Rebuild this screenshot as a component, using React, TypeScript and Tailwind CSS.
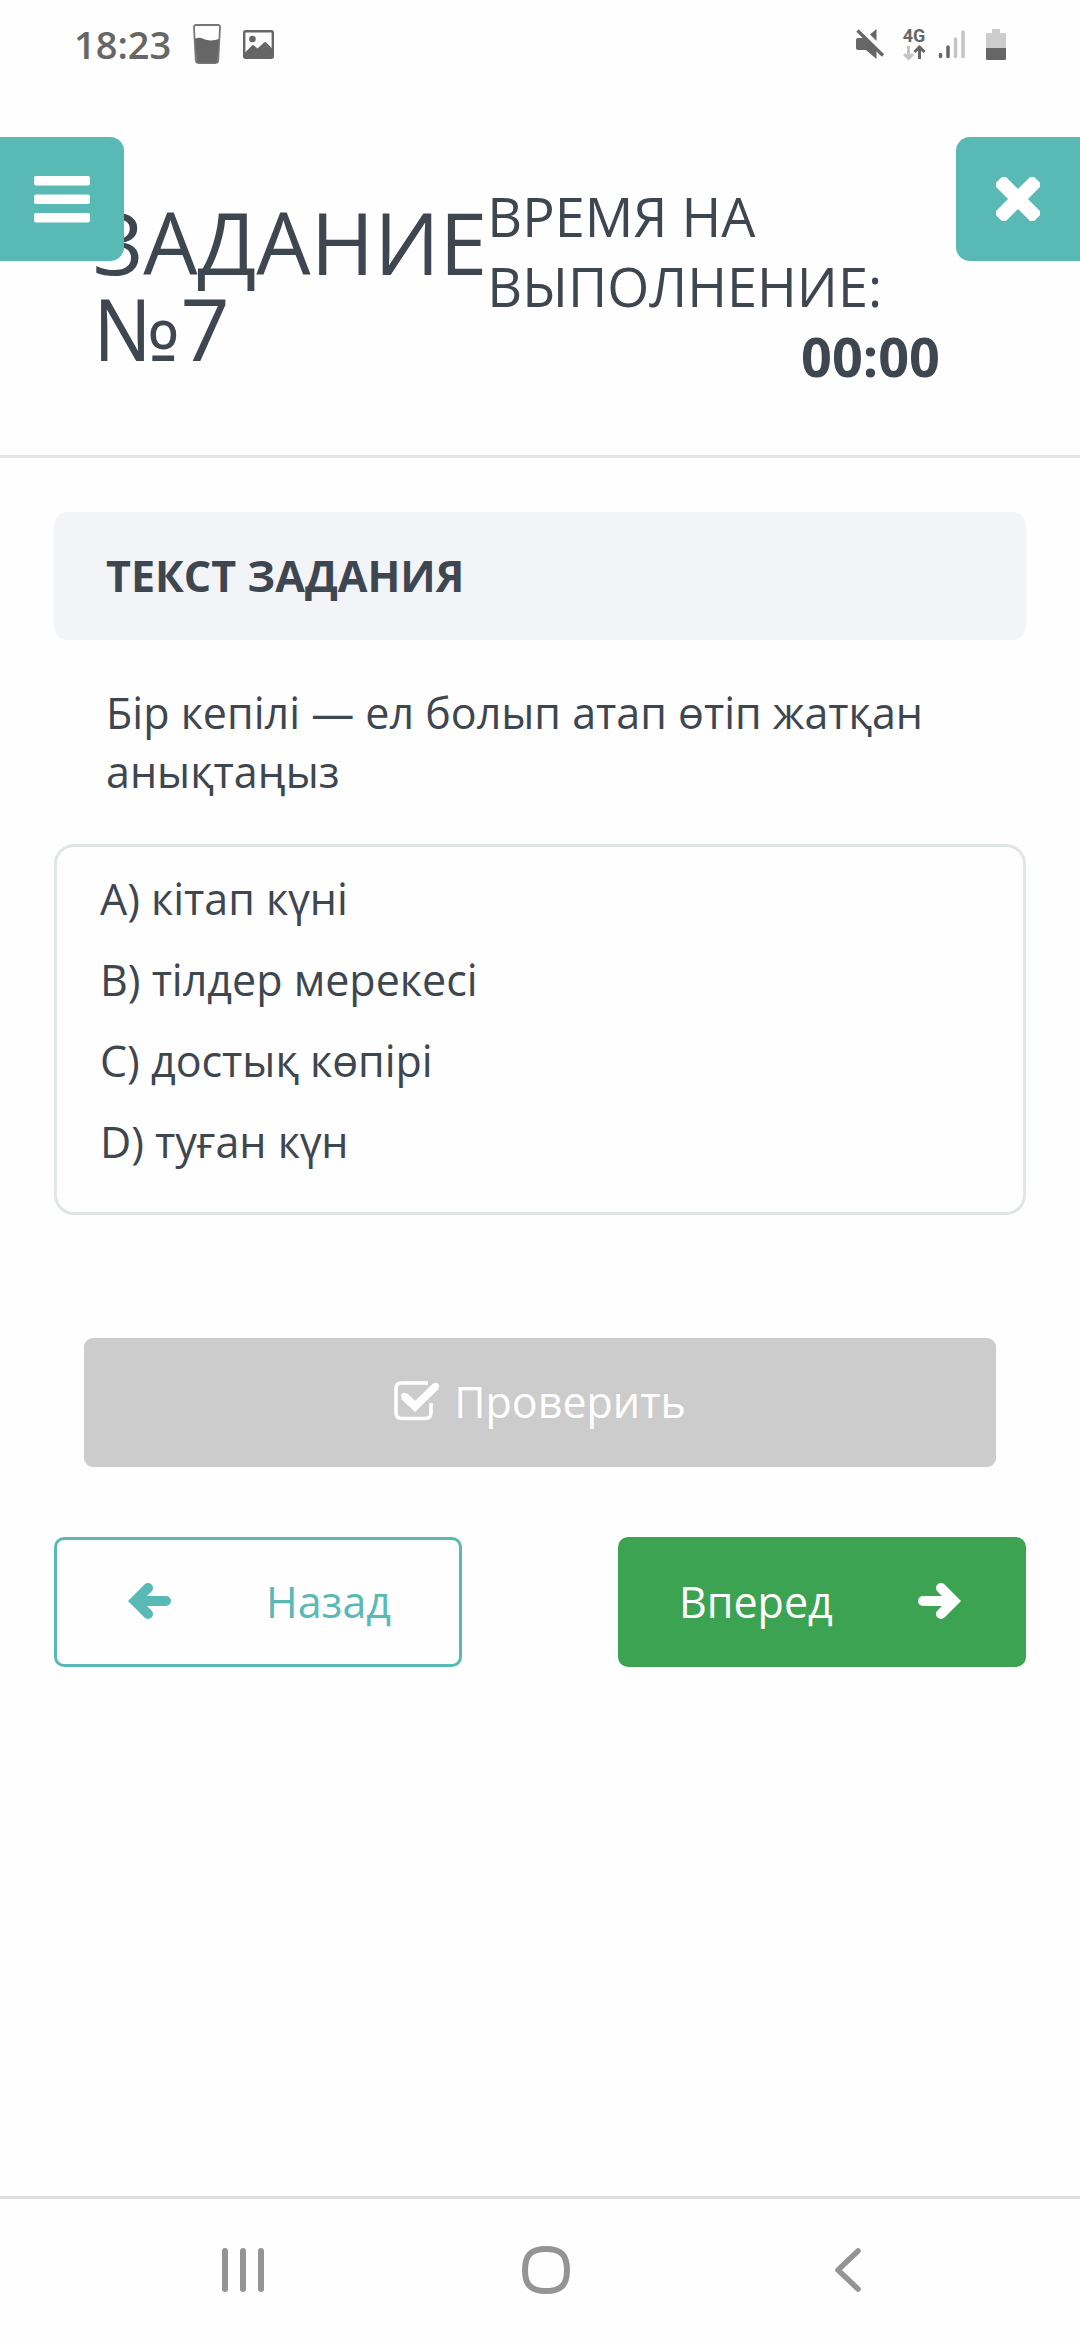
const options = [
  'A) кітап күні',
  'B) тілдер мерекесі',
  'C) достық көпірі',
  'D) туған күн',
]

function GlassIcon() {
  return (
    <svg className="h-10 w-7" viewBox="0 0 28 40">
      <path d="M3 1h22q2.300 0 2 2.500L25.200 36.500Q25 39 22.500 39h-17Q3 39 2.800 36.500L1 3.500Q.7 1 3 1Z" fill="none" stroke="#777" strokeWidth="1.800" />
      <path d="M2 15C5 13 8 13.500 12 15.500q7 2 14-.5l-1.500 21.500q0 2-2 2h-17q-2 0-2-2Z" fill="#666" />
    </svg>
  )
}

function PictureIcon() {
  return (
    <svg className="h-[29px] w-[31px]" viewBox="0 0 31 29">
      <rect x="1.200" y="1.200" width="28.600" height="26.600" rx="1.500" fill="none" stroke="#666" strokeWidth="2.400" />
      <circle cx="9.500" cy="9" r="3.300" fill="#666" />
      <path d="M2 22.500 9 15.500q1-1 2 0l3.500 3L21 12.500q1.200-1 2.400 0L29 18.500V28H2Z" fill="#666" />
    </svg>
  )
}

function MuteIcon() {
  return (
    <svg className="h-8 w-[29px]" viewBox="0 0 29 32" fill="#666">
      <path d="M2 10h6l12.500 12.500V31L10 22H2q-2 0-2-2v-8q0-2 2-2Z" />
      <path d="M20.500 1v12L14 6.500Z" />
      <path d="m1.500 2.500 25.500 25" stroke="#666" strokeWidth="3.200" />
    </svg>
  )
}

function DataArrowsIcon() {
  return (
    <svg className="h-4 w-6" viewBox="0 0 24 16" fill="none" strokeWidth="3">
      <path d="M6.500 1v11M2 9l4.500 4.500L11 9" stroke="#c4c4c4" />
      <path d="M17.500 14V3M12.500 7l5-5 5 5" stroke="#666" />
    </svg>
  )
}

function SignalIcon() {
  return (
    <svg className="h-[30px] w-7" viewBox="0 0 28 30" strokeWidth="3.500" strokeLinecap="round">
      <path d="M2.500 25.500v2M10 18v9.500" stroke="#666" />
      <path d="M17.500 10v17.500M25 3v24.500" stroke="#c4c4c4" />
    </svg>
  )
}

function BatteryIcon() {
  return (
    <svg className="h-[31px] w-5" viewBox="0 0 20 31">
      <path d="M6 0h8v4h5q1 0 1 1v14H0V5q0-1 1-1h5Z" fill="#ccc" />
      <path d="M0 19h20v11q0 1-1 1H1q-1 0-1-1Z" fill="#666" />
    </svg>
  )
}

function CheckIcon() {
  return (
    <svg className="mb-1 h-10 w-[46px]" viewBox="0 0 46 40" fill="none" stroke="#fff">
      <path d="M34 2H7.500Q2 2 2 7.500v24Q2 37.500 7.500 37.500h24q5.500 0 5.500-6V22" strokeWidth="3.600" />
      <path d="m10 15 11 10.500L42 5" strokeWidth="8" />
      <path d="m10 15 11 10.500L42 5" strokeWidth="6" strokeLinecap="round" />
    </svg>
  )
}

function ArrowIcon({ className }: { className?: string }) {
  return (
    <svg className={`mb-[3px] h-9 w-[43px] ${className ?? ''}`} viewBox="0 0 43 36" fill="none" stroke="currentColor" strokeWidth="10" strokeLinecap="round">
      <path d="M5 18h29" />
      <path d="m23 5 13 13-13 13" />
    </svg>
  )
}

export default function App() {
  return (
    <div className="flex min-h-screen flex-col bg-[#fefefe] font-['Open_Sans','Noto_Sans',sans-serif] text-[43px] text-[#3e4650]">
      <div className="flex h-[88px] items-center justify-between pr-[74px] pl-[74px] text-[#666]">
        <div className="flex items-center gap-[22px]">
          <span className="text-[38px] leading-none font-semibold">18:23</span>
          <GlassIcon />
          <PictureIcon />
        </div>
        <div className="flex items-center">
          <MuteIcon />
          <div className="ml-[17px] flex flex-col items-center">
            <span className="font-[Roboto,sans-serif] text-[18px] leading-[18px] font-bold">4G</span>
            <DataArrowsIcon />
          </div>
          <span className="ml-3">
            <SignalIcon />
          </span>
          <span className="ml-5">
            <BatteryIcon />
          </span>
        </div>
      </div>

      <header className="relative flex items-start border-b-[3px] border-[#e4e4e4] pt-[93px] pr-[140px] pb-[64px] pl-[93px]">
        <button type="button" aria-label="Меню" className="absolute top-[49px] left-0 flex h-[124px] w-[124px] items-center justify-center rounded-r-[14px] bg-[#59b9b5]">
          <svg className="h-[47px] w-14" viewBox="0 0 56 47" fill="#fff">
            <rect width="56" height="9.500" rx="2" />
            <rect y="18.500" width="56" height="9.500" rx="2" />
            <rect y="37" width="56" height="9.500" rx="2" />
          </svg>
        </button>
        <h1 className="mt-[18px] w-min text-[86px] leading-[86px]">ЗАДАНИЕ №7</h1>
        <div className="flex-1 text-[54px] leading-[70px]">
          <p>ВРЕМЯ НА ВЫПОЛНЕНИЕ:</p>
          <p className="text-right font-bold">00:00</p>
        </div>
        <button type="button" aria-label="Закрыть" className="absolute top-[49px] right-0 flex h-[124px] w-[124px] items-center justify-center rounded-l-[14px] bg-[#59b9b5]">
          <svg className="h-11 w-11" viewBox="0 0 44 44" fill="#fff">
            <rect x="-5" y="15" width="54" height="14" rx="3" transform="rotate(45 22 22)" />
            <rect x="-5" y="15" width="54" height="14" rx="3" transform="rotate(-45 22 22)" />
          </svg>
        </button>
      </header>

      <main className="flex-1 px-[54px] pt-[54px]">
        <h2 className="flex h-32 items-center rounded-[14px] bg-[#f3f4f8] px-[52px] font-bold">ТЕКСТ ЗАДАНИЯ</h2>
        <p className="mt-[43px] px-[52px] leading-[59px]">Бір кепілі — ел болып атап өтіп жатқан анықтаңыз</p>

        <ul className="mt-[43px] rounded-[20px] border-[3px] border-[#e0e5e8] px-[43px] pt-[11px] pb-[30px] leading-[81px]">
          {options.map((option) => (
            <li key={option}>{option}</li>
          ))}
        </ul>

        <div className="mt-[123px] px-[30px]">
          <button type="button" className="flex h-[129px] w-full items-center justify-center gap-[14px] rounded-[9px] bg-[#ccc] text-white">
            <CheckIcon />
            Проверить
          </button>
        </div>

        <div className="mt-[70px] flex justify-between">
          <button type="button" className="flex h-[130px] w-[408px] items-center justify-between rounded-[10px] border-[3px] border-[#59b9b5] pr-[68px] pl-[71px] text-[#59b9b5]">
            <ArrowIcon className="rotate-180" />
            Назад
          </button>
          <button type="button" className="flex h-[130px] w-[408px] items-center justify-between rounded-[10px] bg-[#3ca353] pr-[65px] pl-[61px] text-white">
            Вперед
            <ArrowIcon />
          </button>
        </div>
      </main>

      <nav className="flex h-36 items-center justify-between border-t-[3px] border-[#e0e0e0] pr-[208px] pl-[219px]">
        <button type="button" aria-label="Недавние" className="flex w-12 justify-center">
          <svg className="h-11 w-11" viewBox="0 0 44 44" stroke="#949494" strokeWidth="6" strokeLinecap="round">
            <path d="M4 3v38M22 3v38M40 3v38" />
          </svg>
        </button>
        <button type="button" aria-label="Домой" className="flex w-12 justify-center">
          <svg className="h-12 w-12" viewBox="0 0 48 48" fill="none" stroke="#949494" strokeWidth="6">
            <path d="M24 3C39 3 45 9 45 24S39 45 24 45 3 39 3 24 9 3 24 3Z" />
          </svg>
        </button>
        <button type="button" aria-label="Назад" className="flex w-12 justify-center">
          <svg className="h-11 w-7" viewBox="0 0 28 44" fill="none" stroke="#949494" strokeWidth="5.500" strokeLinecap="round" strokeLinejoin="round">
            <path d="M24 3 4 22l20 19" />
          </svg>
        </button>
      </nav>
    </div>
  )
}
